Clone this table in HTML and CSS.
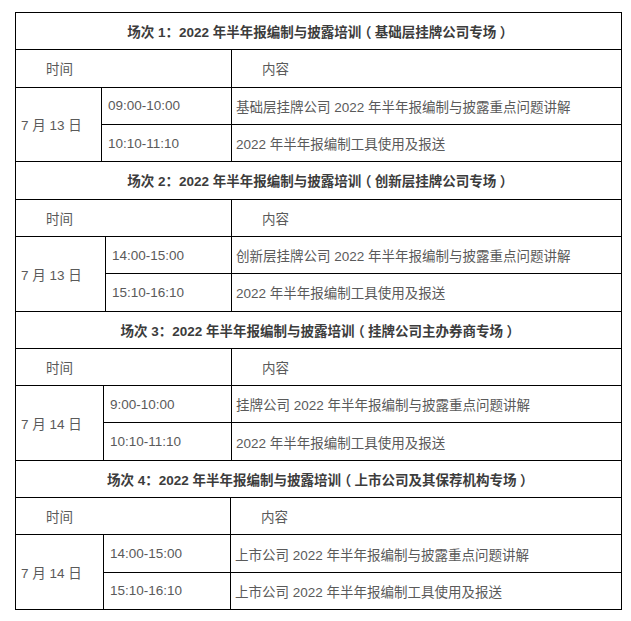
FILE: index.html
```html
<!DOCTYPE html>
<html lang="zh">
<head>
<meta charset="utf-8">
<link rel="stylesheet" href="styles.css">
</head>
<body>
<div class="page">
  <div class="schedule">
    <section class="session s1">
      <div class="cell title">场次 1：2022 年半年报编制与披露培训<span class="paren">（</span>基础层挂牌公司专场<span class="paren">）</span></div>
      <div class="cell head span2">时间</div>
      <div class="cell head">内容</div>
      <div class="cell date">7 月 13 日</div>
      <div class="cell time">09:00-10:00</div>
      <div class="cell content">基础层挂牌公司 2022 年半年报编制与披露重点问题讲解</div>
      <div class="cell time">10:10-11:10</div>
      <div class="cell content">2022 年半年报编制工具使用及报送</div>
    </section>
    <section class="session s2">
      <div class="cell title">场次 2：2022 年半年报编制与披露培训<span class="paren">（</span>创新层挂牌公司专场<span class="paren">）</span></div>
      <div class="cell head span2">时间</div>
      <div class="cell head">内容</div>
      <div class="cell date">7 月 13 日</div>
      <div class="cell time">14:00-15:00</div>
      <div class="cell content">创新层挂牌公司 2022 年半年报编制与披露重点问题讲解</div>
      <div class="cell time">15:10-16:10</div>
      <div class="cell content">2022 年半年报编制工具使用及报送</div>
    </section>
    <section class="session s3">
      <div class="cell title">场次 3：2022 年半年报编制与披露培训<span class="paren">（</span>挂牌公司主办券商专场<span class="paren">）</span></div>
      <div class="cell head span2">时间</div>
      <div class="cell head">内容</div>
      <div class="cell date">7 月 14 日</div>
      <div class="cell time">9:00-10:00</div>
      <div class="cell content">挂牌公司 2022 年半年报编制与披露重点问题讲解</div>
      <div class="cell time">10:10-11:10</div>
      <div class="cell content">2022 年半年报编制工具使用及报送</div>
    </section>
    <section class="session s4">
      <div class="cell title">场次 4：2022 年半年报编制与披露培训<span class="paren">（</span>上市公司及其保荐机构专场<span class="paren">）</span></div>
      <div class="cell head span2">时间</div>
      <div class="cell head">内容</div>
      <div class="cell date">7 月 14 日</div>
      <div class="cell time">14:00-15:00</div>
      <div class="cell content">上市公司 2022 年半年报编制与披露重点问题讲解</div>
      <div class="cell time">15:10-16:10</div>
      <div class="cell content">上市公司 2022 年半年报编制工具使用及报送</div>
    </section>
  </div>
</div>
</body>
</html>
```
FILE: styles.css
```css
html, body {
  margin: 0;
  padding: 0;
  background: #fff;
}

.page {
  padding: 12px 0 0 15px;
  font-family: "Liberation Sans", "Noto Sans CJK SC", sans-serif;
  font-size: 13.5px;
  color: #5a5a5a;
}

.schedule {
  width: 607px;
  box-sizing: border-box;
  background: #000;
  padding: 1px;
  display: flex;
  flex-direction: column;
  gap: 1px;
}

.session {
  display: grid;
  gap: 1px;
  grid-auto-rows: 36.3125px;
}

.s1 { grid-template-columns: 85px 129px 1fr; }
.s2 { grid-template-columns: 89px 125px 1fr; }
.s3 { grid-template-columns: 87px 127px 1fr; }
.s4 { grid-template-columns: 87px 126px 1fr; }

.cell {
  background: #fff;
  display: flex;
  align-items: center;
  white-space: pre;
}

.title {
  grid-column: 1 / -1;
  justify-content: center;
  font-weight: bold;
  color: #3c3c3c;
}

.paren {
  font-family: "Noto Sans CJK SC", sans-serif;
  font-feature-settings: "halt" 1;
  padding: 0 3.4px;
}

.head {
  padding-left: 30px;
}

.span2 {
  grid-column: span 2;
}

.date {
  grid-row: span 2;
  padding-left: 5px;
}

.time {
  padding-left: 6px;
}

.content {
  padding-left: 4px;
}
```
